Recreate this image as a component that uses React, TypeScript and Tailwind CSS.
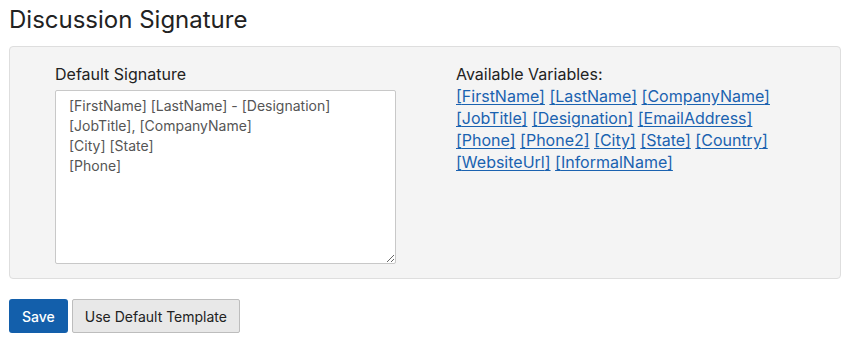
import React from 'react';

const variables = [
  'FirstName', 'LastName', 'CompanyName', 'JobTitle', 'Designation', 'EmailAddress',
  'Phone', 'Phone2', 'City', 'State', 'Country', 'WebsiteUrl', 'InformalName',
];

const defaultSignature = `[FirstName] [LastName] - [Designation]
[JobTitle], [CompanyName]
[City] [State]
[Phone]`;

export default function App() {
  return (
    <div className="w-[850px] h-[341px] bg-white px-[9px] pt-[5px] text-[#222] font-['Inter',sans-serif]">
      <h1 className="text-[24px] leading-[30px] font-normal text-[#222]">Discussion Signature</h1>

      <div className="mt-[11px] h-[233px] w-[832px] rounded-[4px] border border-[#dedede] bg-[#f4f4f4] flex pl-[45px] pt-[16px]">
        <div className="w-[340px]">
          <label className="block text-[16px] leading-[22px] text-[#222]">Default Signature</label>
          <textarea
            className="mt-[5px] block w-[341px] h-[174px] border border-[#c8c8c8] rounded-[2px] bg-white px-[13px] py-[5px] text-[14px] leading-[20px] text-[#555] font-['Inter',sans-serif] outline-none"
            defaultValue={defaultSignature}
          />
        </div>
        <div className="ml-[61px] w-[340px]">
          <div className="text-[16px] leading-[22px] text-[#222]">Available Variables:</div>
          <div className="text-[16px] leading-[22px]">
            {variables.map((v) => (
              <React.Fragment key={v}>
                <a href="#" className="text-[#1a62b0] underline underline-offset-[2px]">[{v}]</a>{' '}
              </React.Fragment>
            ))}
          </div>
        </div>
      </div>

      <div className="mt-[20px] flex gap-[4px]">
        <button className="h-[34px] px-[13px] rounded-[3px] bg-[#135fab] text-white text-[14px] font-medium">Save</button>
        <button className="h-[34px] px-[12px] rounded-[2px] border border-[#bdbdbd] bg-[#e8e8e8] text-[#222] text-[14px]">Use Default Template</button>
      </div>
    </div>
  );
}
